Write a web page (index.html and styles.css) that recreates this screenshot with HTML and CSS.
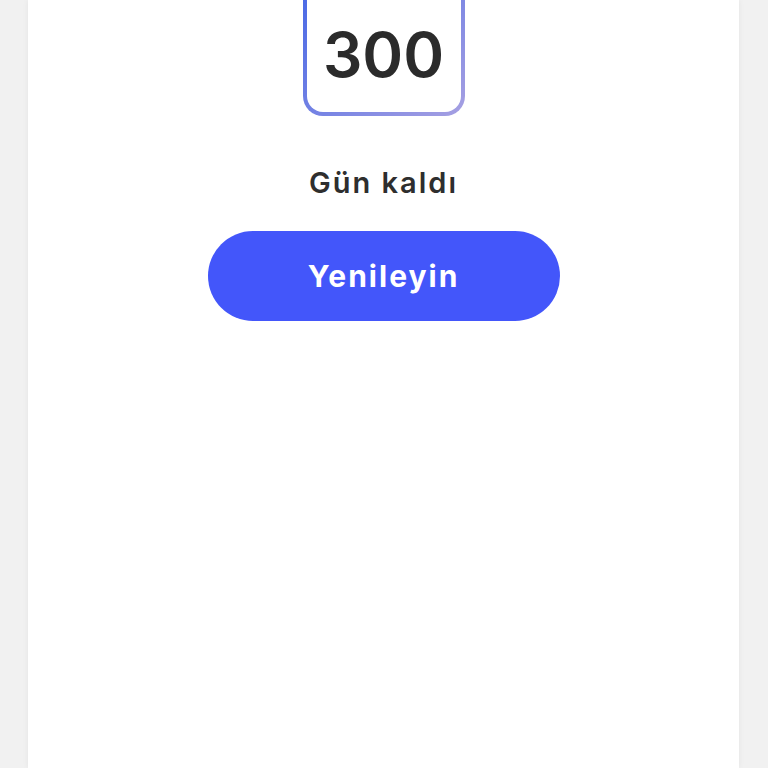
FILE: index.html
```html
<!DOCTYPE html>
<html lang="tr">
<head>
  <meta charset="UTF-8">
  <meta name="viewport" content="width=device-width, initial-scale=1.0">
  <title>Abonelik - Kalan Gün</title>
  <link rel="stylesheet" href="styles.css">
</head>
<body>

<div class="panel">
  <!-- remaining days counter -->
  <div class="counter">
    <span class="counter-number">300</span>
  </div>

  <p class="counter-label">Gün kaldı</p>

  <button type="button" class="renew-btn">Yenileyin</button>
</div>

</body>
</html>
```

FILE: styles.css
```css
body {
  font-family: 'Inter', 'Noto Sans', sans-serif;
  background-color: #f1f1f1;
  margin: 0;
  color: #2e2e2e;
  overflow: hidden;
}
.panel {
  width: 711px;
  min-height: 768px;
  margin: 0 0 0 28px;
  background-color: #ffffff;
  box-shadow: 0 0 6px rgba(0, 0, 0, 0.06);
  display: flex;
  flex-direction: column;
  align-items: center;
}
/* box with gradient border, scrolled partly out of view */
.counter {
  width: 162px;
  height: 156px;
  margin-top: -40px;
  box-sizing: border-box;
  border: 4px solid transparent;
  border-radius: 20px;
  background: linear-gradient(#fff, #fff) padding-box,
              linear-gradient(135deg, #3f63e6, #a6a0e2) border-box;
  display: flex;
  align-items: flex-end;
  justify-content: center;
  padding-bottom: 26px;
}
.counter-number {
  font-size: 62px;
  font-weight: 600;
  line-height: 1;
  color: #2b2b2b;
}
.counter-label {
  margin: 50px 0 0;
  font-size: 29px;
  font-weight: 600;
  letter-spacing: 2px;
  line-height: 1.2;
  color: #2e2e2e;
}
.renew-btn {
  margin-top: 30px;
  width: 352px;
  height: 90px;
  font-family: 'Inter', 'Noto Sans', sans-serif;
  font-size: 30px;
  font-weight: 700;
  letter-spacing: 2px;
  background-color: #4356fa;
  color: #ffffff;
  border: none;
  border-radius: 45px;
  cursor: pointer;
}
```
